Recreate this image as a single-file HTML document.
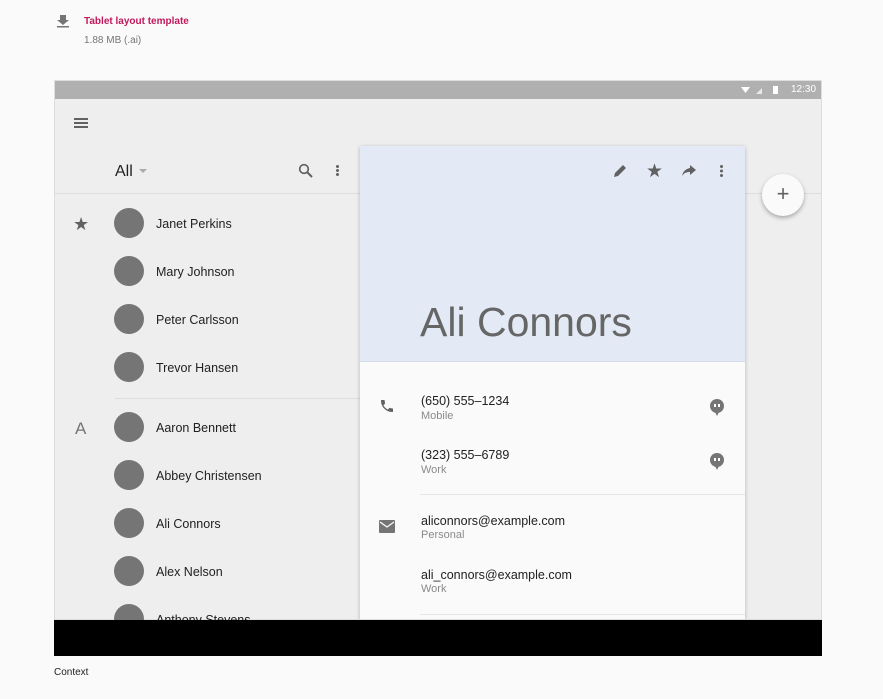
<!DOCTYPE html>
<html><head><style>
*{margin:0;padding:0;box-sizing:border-box}
body{width:883px;height:699px;background:#fafafa;font-family:"Liberation Sans",sans-serif;position:relative;overflow:hidden;color:#212121}
.a{position:absolute}
.av{position:absolute;left:114px;width:30px;height:30px;border-radius:50%;background:#757575}
.nm{position:absolute;left:156px;font-size:12.5px;color:#212121}
.t{position:absolute;left:421px;font-size:12.5px;color:#212121}
.s{position:absolute;left:421px;font-size:11px;color:#8a8a8a}
</style></head><body>
<svg class="a" style="left:56px;top:14px" width="14" height="14" viewBox="0 0 14 14"><path d="M4 1h6v5h3L7 11 1 6h3z" fill="#757575"/><rect x="1" y="12" width="12" height="1.5" fill="#757575"/></svg>
<div class="a" style="left:84px;top:16px;font-size:10px;font-weight:bold;color:#c2185b">Tablet layout template</div>
<div class="a" style="left:84px;top:35px;font-size:10px;color:#757575">1.88 MB (.ai)</div>

<div class="a" style="left:54px;top:80px;width:768px;height:540px;background:#eeeeee;border:1px solid #ddd;overflow:hidden">
 <div class="a" style="left:0;top:0;width:768px;height:18px;background:#b0b0b0"></div>
 <svg class="a" style="left:686px;top:4px" width="40" height="10"><path d="M0 2h9L4.5 8z" fill="#fff"/><path d="M15 9L21 3v6z" fill="#e8e8e8"/><rect x="32" y="1" width="5" height="8" fill="#fff"/></svg>
 <div class="a" style="left:736px;top:3px;font-size:10px;color:#fff">12:30</div>
 <div class="a" style="left:19px;top:37px;width:14px;height:2px;background:#616161;box-shadow:0 4px #616161,0 8px #616161"></div>
 <div class="a" style="left:60px;top:82px;font-size:16px;color:#212121">All</div>
 <svg class="a" style="left:84px;top:88px" width="10" height="5"><path d="M0 0h8L4 4z" fill="#aaa"/></svg>
 <svg class="a" style="left:243px;top:82px" width="16" height="16" viewBox="0 0 16 16"><circle cx="6" cy="6" r="4.3" fill="none" stroke="#616161" stroke-width="1.7"/><path d="M9 9l5 5" stroke="#616161" stroke-width="2"/></svg>
 <div class="a" style="left:281px;top:84px;width:3px;height:3px;border-radius:50%;background:#616161;box-shadow:0 4px #616161,0 8px #616161"></div>
 <div class="a" style="left:0;top:112px;width:306px;height:1px;background:#ddd"></div>
 <div class="a" style="left:436px;top:112px;width:332px;height:1px;background:#ddd"></div>
 <div class="a" style="left:60px;top:317px;width:246px;height:1px;background:#ddd"></div>
 <div class="a" style="left:18px;top:133px;font-size:18px;color:#616161">★</div>
 <div class="a" style="left:20px;top:338px;font-size:17px;color:#757575">A</div>
 <div class="a" style="left:707px;top:93px;width:42px;height:42px;border-radius:50%;background:#fafafa;box-shadow:0 2px 4px rgba(0,0,0,.3);text-align:center;line-height:40px;font-size:22px;color:#616161">+</div>
 <div class="a" style="left:305px;top:65px;width:385px;height:480px;background:#fafafa;box-shadow:0 1px 4px rgba(0,0,0,.25)">
  <div class="a" style="left:0;top:0;width:385px;height:216px;background:#e3eaf5;border-bottom:1px solid #d4dbe6"></div>
  <svg class="a" style="left:252px;top:17px" width="16" height="16"><path d="M2 14l1-4 8-8 3 3-8 8z" fill="#616161"/></svg>
  <div class="a" style="left:286px;top:14px;font-size:19px;color:#616161">★</div>
  <svg class="a" style="left:322px;top:19px" width="14" height="12"><path d="M8 0l6 5-6 5V7C4 7 2 8 0 11 1 6 4 4 8 3z" fill="#616161"/></svg>
  <div class="a" style="left:360px;top:19px;width:3px;height:3px;border-radius:50%;background:#616161;box-shadow:0 4.5px #616161,0 9px #616161"></div>
  <div class="a" style="left:60px;top:153px;font-size:41px;color:#666">Ali Connors</div>
  <svg class="a" style="left:19px;top:252px" width="16" height="16" viewBox="0 0 24 24"><path d="M6.6 10.8c1.4 2.8 3.800 5.1 6.6 6.6l2.2-2.2c.3-.3.7-.4 1-.2 1.1.4 2.3.6 3.6.6.6 0 1 .4 1 1V20c0 .6-.4 1-1 1C10.6 21 3 13.4 3 4c0-.6.4-1 1-1h3.5c.6 0 1 .4 1 1 0 1.3.2 2.5.6 3.6.1.3 0 .7-.2 1z" fill="#616161"/></svg>
  <svg class="a" style="left:19px;top:374px" width="16" height="13"><rect width="16" height="13" rx="1" fill="#757575"/><path d="M1 2l7 5 7-5" stroke="#fafafa" stroke-width="1.3" fill="none"/></svg>
  <svg class="a" style="left:350px;top:253px" width="14" height="17"><circle cx="7" cy="7" r="7" fill="#757575"/><path d="M5 13l2 4 2-4z" fill="#757575"/><rect x="4" y="5" width="2" height="3" fill="#fff"/><rect x="8" y="5" width="2" height="3" fill="#fff"/></svg>
  <svg class="a" style="left:350px;top:307px" width="14" height="17"><circle cx="7" cy="7" r="7" fill="#757575"/><path d="M5 13l2 4 2-4z" fill="#757575"/><rect x="4" y="5" width="2" height="3" fill="#fff"/><rect x="8" y="5" width="2" height="3" fill="#fff"/></svg>
  <div class="a" style="left:60px;top:348px;width:325px;height:1px;background:#e5e5e5"></div>
  <div class="a" style="left:60px;top:468px;width:325px;height:1px;background:#e5e5e5"></div>
 </div>
</div>
<div class="t" style="top:394px">(650) 555–1234</div><div class="s" style="top:410px">Mobile</div>
<div class="t" style="top:448px">(323) 555–6789</div><div class="s" style="top:464px">Work</div>
<div class="t" style="top:514px">aliconnors@example.com</div><div class="s" style="top:529px">Personal</div>
<div class="t" style="top:568px">ali_connors@example.com</div><div class="s" style="top:583px">Work</div>

<div class="av" style="top:208px"></div><div class="nm" style="top:217px">Janet Perkins</div>
<div class="av" style="top:256px"></div><div class="nm" style="top:265px">Mary Johnson</div>
<div class="av" style="top:304px"></div><div class="nm" style="top:313px">Peter Carlsson</div>
<div class="av" style="top:352px"></div><div class="nm" style="top:361px">Trevor Hansen</div>
<div class="av" style="top:412px"></div><div class="nm" style="top:421px">Aaron Bennett</div>
<div class="av" style="top:460px"></div><div class="nm" style="top:469px">Abbey Christensen</div>
<div class="av" style="top:508px"></div><div class="nm" style="top:517px">Ali Connors</div>
<div class="av" style="top:556px"></div><div class="nm" style="top:565px">Alex Nelson</div>
<div class="av" style="top:604px"></div><div class="nm" style="top:613px">Anthony Stevens</div>

<div class="a" style="left:54px;top:620px;width:768px;height:36px;background:#000"></div>
<div class="a" style="left:54px;top:667px;font-size:10px;color:#212121">Context</div>
</body></html>
